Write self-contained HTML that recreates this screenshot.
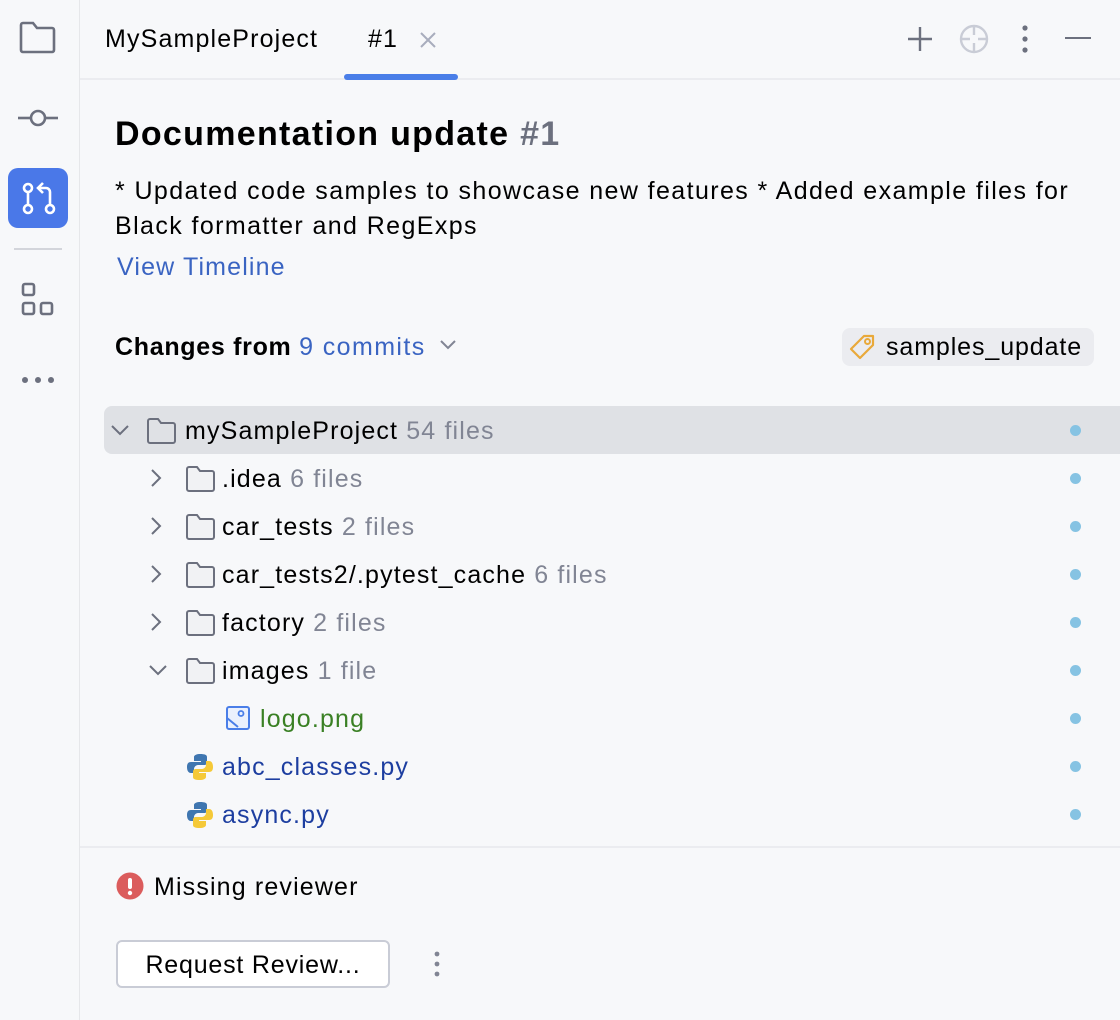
<!DOCTYPE html>
<html><head><meta charset="utf-8"><style>
*{margin:0;padding:0;box-sizing:border-box}
body{width:1120px;height:1020px;background:#f7f8fa;font-family:"Liberation Sans",sans-serif;color:#000;position:relative;overflow:hidden}
.a{position:absolute;white-space:nowrap}
.t{font-size:25px;line-height:30px;letter-spacing:1.15px}
.g{color:#818594}
.dot{position:absolute;left:1070px;width:11px;height:11px;border-radius:50%;background:#86c3e3}
svg{position:absolute}
</style></head><body>
<div class="a" style="left:79px;top:0;width:1px;height:1020px;background:#e6e7ea"></div>
<div class="a" style="left:80px;top:78px;width:1040px;height:2px;background:#ebecf0"></div>
<svg style="left:18px;top:20px" width="40" height="36" viewBox="0 0 40 36"><path d="M3 5 a2 2 0 0 1 2-2 h10 l4 5 h15 a2 2 0 0 1 2 2 v20 a2 2 0 0 1-2 2 H5 a2 2 0 0 1-2-2z" fill="none" stroke="#6c707e" stroke-width="2.6"/></svg>
<svg style="left:17px;top:105px" width="42" height="26"><line x1="1" y1="13" x2="13" y2="13" stroke="#6c707e" stroke-width="2.6"/><line x1="29" y1="13" x2="41" y2="13" stroke="#6c707e" stroke-width="2.6"/><circle cx="21" cy="13" r="7" fill="none" stroke="#6c707e" stroke-width="2.6"/></svg>
<div class="a" style="left:8px;top:168px;width:60px;height:60px;border-radius:10px;background:#4a78e8"></div>
<svg style="left:8px;top:168px" width="60" height="60"><g fill="none" stroke="#fff" stroke-width="2.6"><circle cx="20" cy="20" r="4"/><circle cx="20" cy="41" r="4"/><circle cx="42" cy="41" r="4"/><line x1="20" y1="24" x2="20" y2="37"/><path d="M42 37 V24 a4 4 0 0 0-4-4 H31"/><path d="M35 15 l-5 5 5 5"/></g></svg>
<div class="a" style="left:14px;top:248px;width:48px;height:2px;background:#d3d5db"></div>
<svg style="left:20px;top:282px" width="36" height="36"><g fill="none" stroke="#6c707e" stroke-width="2.6"><rect x="3" y="2" width="11" height="11" rx="2"/><rect x="3" y="21" width="11" height="11" rx="2"/><rect x="21" y="21" width="11" height="11" rx="2"/></g></svg>
<svg style="left:20px;top:372px" width="38" height="16"><g fill="#6c707e"><circle cx="5" cy="8" r="3"/><circle cx="18" cy="8" r="3"/><circle cx="31" cy="8" r="3"/></g></svg>
<div class="a t" style="left:105px;top:24px">MySampleProject</div>
<div class="a t" style="left:368px;top:24px">#1</div>
<svg style="left:419px;top:31px" width="18" height="18"><path d="M2 2L16 16M16 2L2 16" stroke="#a8adbd" stroke-width="2"/></svg>
<div class="a" style="left:344px;top:74px;width:114px;height:6px;border-radius:3px;background:#4a7ee8"></div>
<svg style="left:905px;top:24px" width="30" height="30"><path d="M15 3V27M3 15H27" stroke="#6c707e" stroke-width="2.4"/></svg>
<svg style="left:958px;top:23px" width="32" height="32"><circle cx="16" cy="16" r="13" fill="none" stroke="#c9ccd6" stroke-width="2.4"/><path d="M16 3v9M16 20v9M3 16h9M20 16h9" stroke="#c9ccd6" stroke-width="2.4"/></svg>
<svg style="left:1019px;top:24px" width="12" height="30"><g fill="#6c707e"><circle cx="6" cy="4" r="2.6"/><circle cx="6" cy="15" r="2.6"/><circle cx="6" cy="26" r="2.6"/></g></svg>
<div class="a" style="left:1065px;top:37px;width:26px;height:2.4px;background:#6c707e"></div>
<div class="a" style="left:115px;top:113px;font-size:34px;line-height:42px;font-weight:bold;letter-spacing:1.3px">Documentation update <span style="color:#6c707e">#1</span></div>
<div class="a t" style="left:115px;top:176px;letter-spacing:1.4px">* Updated code samples to showcase new features * Added example files for</div>
<div class="a t" style="left:115px;top:211px;letter-spacing:1.4px">Black formatter and RegExps</div>
<div class="a t" style="left:117px;top:252px;color:#3a64c2">View Timeline</div>
<div class="a t" style="left:115px;top:332px;font-weight:bold;letter-spacing:0.7px">Changes from <span style="font-weight:normal;color:#3a64c2;letter-spacing:1.4px">9 commits</span></div>
<svg style="left:439px;top:338px" width="18" height="14"><path d="M2 3l7 7 7-7" fill="none" stroke="#818594" stroke-width="2"/></svg>
<div class="a" style="left:842px;top:328px;width:252px;height:38px;border-radius:8px;background:#ebecf0"></div>
<svg style="left:847px;top:332px" width="30" height="30"><path d="M4 17 L17 4 H26 V13 L13 26 Z" fill="none" stroke="#e9a93a" stroke-width="2.2" stroke-linejoin="round"/><circle cx="20.5" cy="9.5" r="2.5" fill="none" stroke="#e9a93a" stroke-width="2"/></svg>
<div class="a t" style="left:886px;top:332px;letter-spacing:0.9px">samples_update</div>
<div class="a" style="left:104px;top:406px;width:1016px;height:48px;border-radius:8px 0 0 8px;background:#dfe1e5"></div>
<svg style="left:110px;top:423px" width="20" height="14"><path d="M2 3l8 8 8-8" fill="none" stroke="#6c707e" stroke-width="2"/></svg>
<svg style="left:146px;top:417px" width="32" height="28"><path d="M2 4 a2 2 0 0 1 2-2 h8 l3 4 h12 a2 2 0 0 1 2 2 v16 a2 2 0 0 1-2 2 H4 a2 2 0 0 1-2-2z" fill="none" stroke="#6c707e" stroke-width="2"/></svg>
<div class="a t" style="left:185px;top:416px">mySampleProject <span class="g">54 files</span></div>
<div class="dot" style="top:425px"></div>
<svg style="left:148px;top:468px" width="16" height="20"><path d="M4 2l8 8-8 8" fill="none" stroke="#6c707e" stroke-width="2"/></svg>
<svg style="left:185px;top:465px" width="32" height="28"><path d="M2 4 a2 2 0 0 1 2-2 h8 l3 4 h12 a2 2 0 0 1 2 2 v16 a2 2 0 0 1-2 2 H4 a2 2 0 0 1-2-2z" fill="#f1f2f4" stroke="#6c707e" stroke-width="2"/></svg>
<div class="a t" style="left:222px;top:464px">.idea <span class="g">6 files</span></div>
<div class="dot" style="top:473px"></div>
<svg style="left:148px;top:516px" width="16" height="20"><path d="M4 2l8 8-8 8" fill="none" stroke="#6c707e" stroke-width="2"/></svg>
<svg style="left:185px;top:513px" width="32" height="28"><path d="M2 4 a2 2 0 0 1 2-2 h8 l3 4 h12 a2 2 0 0 1 2 2 v16 a2 2 0 0 1-2 2 H4 a2 2 0 0 1-2-2z" fill="#f1f2f4" stroke="#6c707e" stroke-width="2"/></svg>
<div class="a t" style="left:222px;top:512px">car_tests <span class="g">2 files</span></div>
<div class="dot" style="top:521px"></div>
<svg style="left:148px;top:564px" width="16" height="20"><path d="M4 2l8 8-8 8" fill="none" stroke="#6c707e" stroke-width="2"/></svg>
<svg style="left:185px;top:561px" width="32" height="28"><path d="M2 4 a2 2 0 0 1 2-2 h8 l3 4 h12 a2 2 0 0 1 2 2 v16 a2 2 0 0 1-2 2 H4 a2 2 0 0 1-2-2z" fill="#f1f2f4" stroke="#6c707e" stroke-width="2"/></svg>
<div class="a t" style="left:222px;top:560px">car_tests2/.pytest_cache <span class="g">6 files</span></div>
<div class="dot" style="top:569px"></div>
<svg style="left:148px;top:612px" width="16" height="20"><path d="M4 2l8 8-8 8" fill="none" stroke="#6c707e" stroke-width="2"/></svg>
<svg style="left:185px;top:609px" width="32" height="28"><path d="M2 4 a2 2 0 0 1 2-2 h8 l3 4 h12 a2 2 0 0 1 2 2 v16 a2 2 0 0 1-2 2 H4 a2 2 0 0 1-2-2z" fill="#f1f2f4" stroke="#6c707e" stroke-width="2"/></svg>
<div class="a t" style="left:222px;top:608px">factory <span class="g">2 files</span></div>
<div class="dot" style="top:617px"></div>
<svg style="left:148px;top:663px" width="20" height="14"><path d="M2 3l8 8 8-8" fill="none" stroke="#6c707e" stroke-width="2"/></svg>
<svg style="left:185px;top:657px" width="32" height="28"><path d="M2 4 a2 2 0 0 1 2-2 h8 l3 4 h12 a2 2 0 0 1 2 2 v16 a2 2 0 0 1-2 2 H4 a2 2 0 0 1-2-2z" fill="#f1f2f4" stroke="#6c707e" stroke-width="2"/></svg>
<div class="a t" style="left:222px;top:656px">images <span class="g">1 file</span></div>
<div class="dot" style="top:665px"></div>
<svg style="left:225px;top:705px" width="26" height="26"><rect x="2" y="2" width="22" height="22" rx="2" fill="#eaf0fd" stroke="#4a7ee8" stroke-width="2"/><circle cx="16" cy="8.5" r="2.5" fill="none" stroke="#4a7ee8" stroke-width="1.8"/><path d="M2 13 L13 22" stroke="#4a7ee8" stroke-width="2" fill="none"/></svg>
<div class="a t" style="left:260px;top:704px;color:#3a8024">logo.png</div>
<div class="dot" style="top:713px"></div>
<svg style="left:186px;top:753px" width="28" height="28"><path d="M14 1c-6 0-6 3-6 3v4h7v1H5C2 9 1 11 1 14s1 6 4 6h3v-4c0-2 2-4 4-4h6c2 0 3-1 3-3V4c0-2-2-3-7-3z" fill="#3f76b0"/><path d="M14 27c6 0 6-3 6-3v-4h-7v-1h10c3 0 4-2 4-5s-1-6-4-6h-3v4c0 2-2 4-4 4h-6c-2 0-3 1-3 3v5c0 2 2 3 7 3z" fill="#f5c938"/></svg>
<div class="a t" style="left:222px;top:752px;color:#1d3ea0">abc_classes.py</div>
<div class="dot" style="top:761px"></div>
<svg style="left:186px;top:801px" width="28" height="28"><path d="M14 1c-6 0-6 3-6 3v4h7v1H5C2 9 1 11 1 14s1 6 4 6h3v-4c0-2 2-4 4-4h6c2 0 3-1 3-3V4c0-2-2-3-7-3z" fill="#3f76b0"/><path d="M14 27c6 0 6-3 6-3v-4h-7v-1h10c3 0 4-2 4-5s-1-6-4-6h-3v4c0 2-2 4-4 4h-6c-2 0-3 1-3 3v5c0 2 2 3 7 3z" fill="#f5c938"/></svg>
<div class="a t" style="left:222px;top:800px;color:#1d3ea0">async.py</div>
<div class="dot" style="top:809px"></div>
<div class="a" style="left:80px;top:846px;width:1040px;height:2px;background:#ebecf0"></div>
<svg style="left:116px;top:872px" width="28" height="28"><circle cx="14" cy="14" r="13.5" fill="#db5c5c"/><rect x="12" y="6" width="4" height="11" rx="2" fill="#fff"/><circle cx="14" cy="21" r="2.2" fill="#fff"/></svg>
<div class="a t" style="left:154px;top:872px">Missing reviewer</div>
<div class="a" style="left:116px;top:940px;width:274px;height:48px;border:2px solid #c9ccd6;border-radius:6px;background:#fff"></div>
<div class="a t" style="left:116px;top:950px;width:274px;text-align:center;letter-spacing:0.8px">Request Review...</div>
<svg style="left:431px;top:950px" width="12" height="30"><g fill="#818594"><circle cx="6" cy="4" r="2.4"/><circle cx="6" cy="14" r="2.4"/><circle cx="6" cy="24" r="2.4"/></g></svg>
</body></html>
